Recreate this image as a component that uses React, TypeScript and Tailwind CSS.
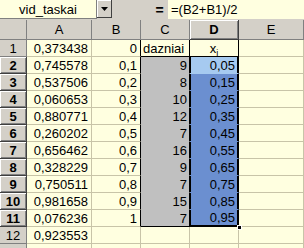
import React from "react";

const rows: [string, string, string, string][] = [
  ["0,745578", "0,1", "9", "0,05"],
  ["0,537506", "0,2", "8", "0,15"],
  ["0,060653", "0,3", "10", "0,25"],
  ["0,880771", "0,4", "12", "0,35"],
  ["0,260202", "0,5", "7", "0,45"],
  ["0,656462", "0,6", "16", "0,55"],
  ["0,328229", "0,7", "9", "0,65"],
  ["0,750511", "0,8", "7", "0,75"],
  ["0,981658", "0,9", "15", "0,85"],
  ["0,076236", "1", "7", "0,95"],
];

function RowHeadSel({ n }: { n: number }) {
  return (
    <div className="h-[17px] flex items-center justify-center font-bold bg-[#d4d0c8] border-r border-b border-[#404040] shadow-[inset_1px_1px_0_#ffffff,inset_-1px_-1px_0_#808080]">
      {n}
    </div>
  );
}

function RowHeadPlain({ n }: { n?: number }) {
  return (
    <div className="h-[17px] flex items-center justify-center bg-[#d4d0c8] border-r border-b border-[#808080]">
      {n}
    </div>
  );
}

export default function App() {
  return (
    <div
      className="w-[304px] h-[248px] overflow-hidden bg-[#d4d0c8] text-[13px] leading-none text-black"
      style={{ fontFamily: '"Liberation Sans", Arial, sans-serif' }}
    >
      {/* formula bar */}
      <div className="flex h-[20px] items-start bg-[#d4d0c8]">
        <div className="w-[97px] h-[19px] bg-[#ffffe0] border-r border-b border-[#808080] flex items-center justify-center">
          vid_taskai
        </div>
        <div className="w-[15px] h-[18px] bg-[#d4d0c8] border-r border-b border-[#404040] shadow-[inset_1px_1px_0_#ffffff] flex items-center justify-center">
          <svg width="7" height="4" viewBox="0 0 7 4">
            <path d="M0 0 H7 L3.5 4 Z" fill="#000" />
          </svg>
        </div>
        <div className="w-[40px]" />
        <div className="w-[15px] h-[19px] flex items-center justify-center font-bold text-[14px]">=</div>
        <div className="flex-1 h-[19px] bg-[#ffffe0] border-l border-[#d4d0c8] flex items-center pl-[3px]">
          =(B2+B1)/2
        </div>
      </div>

      {/* sheet */}
      <div className="grid grid-cols-[27px_65px_49px_49px_49px_65px] bg-[#ffffe0]">
        {/* column headers */}
        <div className="h-[20px] bg-[#d4d0c8] border-r border-b border-[#808080]" />
        <div className="h-[20px] bg-[#d4d0c8] border-r border-b border-[#808080] flex items-center justify-center">A</div>
        <div className="h-[20px] bg-[#d4d0c8] border-r border-b border-[#808080] flex items-center justify-center">B</div>
        <div className="h-[20px] bg-[#d4d0c8] border-r border-b border-[#808080] flex items-center justify-center">C</div>
        <div className="h-[20px] bg-[#d4d0c8] border-r border-b border-[#404040] shadow-[inset_1px_1px_0_#ffffff,inset_-1px_-1px_0_#808080] flex items-center justify-center font-bold">D</div>
        <div className="h-[20px] bg-[#d4d0c8] border-r border-b border-[#808080] flex items-center justify-center">E</div>

        {/* row 1 */}
        <RowHeadPlain n={1} />
        <div className="h-[17px] border-r border-b border-[#c8c4a8] flex items-center justify-end pr-[3px]">0,373438</div>
        <div className="h-[17px] border-r border-b border-r-black border-b-[#c8c4a8] flex items-center justify-end pr-[3px]">0</div>
        <div className="h-[17px] border-r border-b border-black flex items-center pl-[2px]">dazniai</div>
        <div className="h-[17px] border-r border-b border-black flex items-center justify-center">
          <span>
            x<sub className="text-[9px] align-baseline relative top-[3px]">i</sub>
          </span>
        </div>
        <div className="h-[17px] border-r border-b border-[#c8c4a8]" />

        {/* rows 2-11 */}
        {rows.map((r, i) => {
          const last = i === rows.length - 1;
          return (
            <React.Fragment key={i}>
              <RowHeadSel n={i + 2} />
              <div className="h-[17px] border-r border-b border-[#c8c4a8] flex items-center justify-end pr-[3px]">{r[0]}</div>
              <div className="h-[17px] border-r border-b border-r-black border-b-[#c8c4a8] flex items-center justify-end pr-[3px]">{r[1]}</div>
              <div
                className={
                  last
                    ? "h-[17px] bg-[#c0c0c0] border-r border-b border-black flex items-center justify-end pr-[2px]"
                    : "h-[17px] bg-[#c0c0c0] border-r border-b border-r-black border-b-[#c0c0c0] flex items-center justify-end pr-[2px]"
                }
              >
                {r[2]}
              </div>
              <div
                className={
                  i === 0
                    ? "h-[17px] bg-[#a6caf0] border-r border-b border-r-black border-b-[#a6caf0] shadow-[inset_1px_0_0_#000,inset_-1px_0_0_#000] flex items-center justify-end pr-[3px]"
                    : last
                    ? "relative h-[17px] bg-[#6b8fd0] border-r border-b-2 border-black shadow-[inset_1px_0_0_#000,inset_-1px_0_0_#000] flex items-center justify-end pr-[3px]"
                    : "h-[17px] bg-[#6b8fd0] border-r border-b border-r-black border-b-[#6b8fd0] shadow-[inset_1px_0_0_#000,inset_-1px_0_0_#000] flex items-center justify-end pr-[3px]"
                }
              >
                {r[3]}
                {last && (
                  <span className="absolute right-[-4px] bottom-[-5px] w-[5px] h-[5px] bg-black border border-white" />
                )}
              </div>
              <div className="h-[17px] border-r border-b border-[#c8c4a8]" />
            </React.Fragment>
          );
        })}

        {/* row 12 */}
        <RowHeadPlain n={12} />
        <div className="h-[17px] border-r border-b border-[#c8c4a8] flex items-center justify-end pr-[3px]">0,923553</div>
        <div className="h-[17px] border-r border-b border-[#c8c4a8]" />
        <div className="h-[17px] border-r border-b border-[#c8c4a8]" />
        <div className="h-[17px] border-r border-b border-[#c8c4a8]" />
        <div className="h-[17px] border-r border-b border-[#c8c4a8]" />

        {/* row 13 (partly visible) */}
        <RowHeadPlain />
        <div className="h-[17px] border-r border-b border-[#c8c4a8]" />
        <div className="h-[17px] border-r border-b border-[#c8c4a8]" />
        <div className="h-[17px] border-r border-b border-[#c8c4a8]" />
        <div className="h-[17px] border-r border-b border-[#c8c4a8]" />
        <div className="h-[17px] border-r border-b border-[#c8c4a8]" />
      </div>
    </div>
  );
}
